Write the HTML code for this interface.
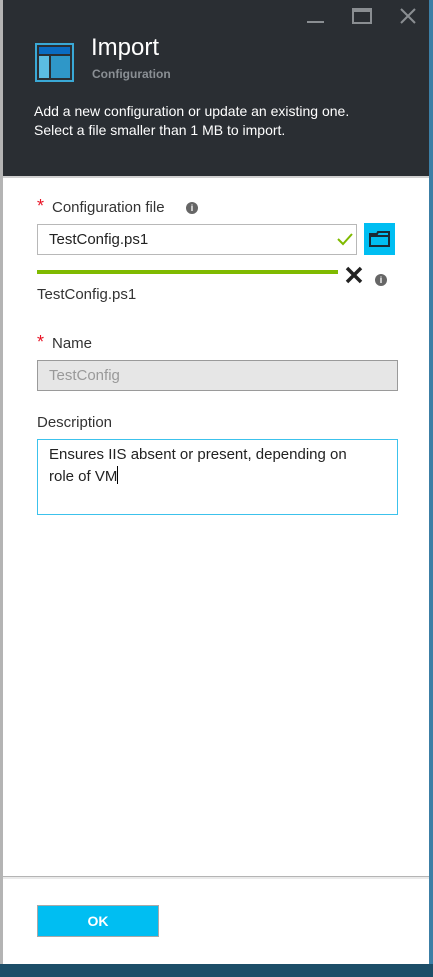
<!DOCTYPE html>
<html><head><style>
*{margin:0;padding:0;box-sizing:border-box}
body{width:433px;height:977px;position:relative;overflow:hidden;background:#fff;font-family:"Segoe UI","Liberation Sans",sans-serif;}
.a{position:absolute}
</style></head><body>
<div class="a" style="left:0;top:0;width:3px;height:964px;background:#b4b4b4"></div>
<div class="a" style="left:429px;top:0;width:4px;height:964px;background:#3c7fa6"></div>
<div class="a" style="left:3px;top:0;width:426px;height:176px;background:#2a2e33"></div>
<div class="a" style="left:3px;top:176px;width:426px;height:2px;background:#d0d0d0"></div>
<div class="a" style="left:307px;top:21px;width:17px;height:2px;background:#8a8e92"></div>
<div class="a" style="left:352px;top:8px;width:20px;height:16px;border:2px solid #8a8e92;border-top-width:4px"></div>
<svg class="a" style="left:400px;top:8px" width="16" height="16"><path d="M1 1L15 15M15 1L1 15" stroke="#8a8e92" stroke-width="2"/></svg>
<div class="a" style="left:35px;top:43px;width:39px;height:39px;border:2px solid #3aa9d6;background:#2a2e33"></div>
<div class="a" style="left:39px;top:47px;width:31px;height:7px;background:#0a6bc2"></div>
<div class="a" style="left:39px;top:56px;width:10px;height:22px;background:#5bbce2"></div>
<div class="a" style="left:51px;top:56px;width:19px;height:22px;background:#2f97c8"></div>
<div class="a" style="left:91px;top:34px;color:#fff;font-size:24px">Import</div>
<div class="a" style="left:92px;top:67px;color:#8a8f94;font-size:12px;font-weight:bold">Configuration</div>
<div class="a" style="left:34px;top:102px;color:#fff;font-size:14px;line-height:19px">Add a new configuration or update an existing one.<br>Select a file smaller than 1 MB to import.</div>
<div class="a" style="left:37px;top:196px;color:#e81123;font-size:18px">*</div>
<div class="a" style="left:52px;top:199px;color:#333;font-size:15px">Configuration file</div>
<div class="a" style="left:186px;top:202px;width:12px;height:12px;border-radius:50%;background:#666;color:#fff;font-size:9px;text-align:center;line-height:12px;font-weight:bold">i</div>
<div class="a" style="left:37px;top:224px;width:320px;height:31px;border:1px solid #b8b8b8"></div>
<div class="a" style="left:49px;top:231px;color:#222;font-size:15px">TestConfig.ps1</div>
<svg class="a" style="left:337px;top:232px" width="16" height="14"><path d="M1 7L6 12L15 2" stroke="#7fba00" stroke-width="2" fill="none"/></svg>
<div class="a" style="left:364px;top:223px;width:31px;height:32px;background:#00bef2"></div>
<svg class="a" style="left:369px;top:230px" width="22" height="18"><path d="M1 4H8L9 2H20V16H1Z" fill="none" stroke="#1a2a36" stroke-width="2"/><path d="M1 6H20" stroke="#1a2a36" stroke-width="2"/></svg>
<div class="a" style="left:37px;top:270px;width:301px;height:4px;background:#7fba00"></div>
<svg class="a" style="left:345px;top:266px" width="18" height="18"><path d="M2 2L16 16M16 2L2 16" stroke="#222" stroke-width="3.5"/></svg>
<div class="a" style="left:375px;top:274px;width:12px;height:12px;border-radius:50%;background:#666;color:#fff;font-size:9px;text-align:center;line-height:12px;font-weight:bold">i</div>
<div class="a" style="left:37px;top:286px;color:#333;font-size:15px">TestConfig.ps1</div>
<div class="a" style="left:37px;top:332px;color:#e81123;font-size:18px">*</div>
<div class="a" style="left:52px;top:335px;color:#333;font-size:15px">Name</div>
<div class="a" style="left:37px;top:360px;width:361px;height:31px;border:1px solid #9a9a9a;background:#e6e6e6"></div>
<div class="a" style="left:49px;top:367px;color:#999;font-size:15px">TestConfig</div>
<div class="a" style="left:37px;top:414px;color:#333;font-size:15px">Description</div>
<div class="a" style="left:37px;top:439px;width:361px;height:76px;border:1px solid #3cc2ec"></div>
<div class="a" style="left:49px;top:444px;color:#222;font-size:15px;line-height:22px">Ensures IIS absent or present, depending on<br>role of VM<span style="display:inline-block;width:1px;height:18px;background:#000;vertical-align:-3px"></span></div>
<div class="a" style="left:3px;top:876px;width:426px;height:1px;background:#b4b4b4"></div>
<div class="a" style="left:3px;top:877px;width:426px;height:2px;background:#eaeaea"></div>
<div class="a" style="left:37px;top:905px;width:122px;height:32px;background:#00bef2;border:1px solid #a8a8a8;color:#fff;font-weight:bold;font-size:14px;text-align:center;line-height:30px">OK</div>
<div class="a" style="left:0;top:964px;width:433px;height:13px;background:#1d4e68"></div>
</body></html>
